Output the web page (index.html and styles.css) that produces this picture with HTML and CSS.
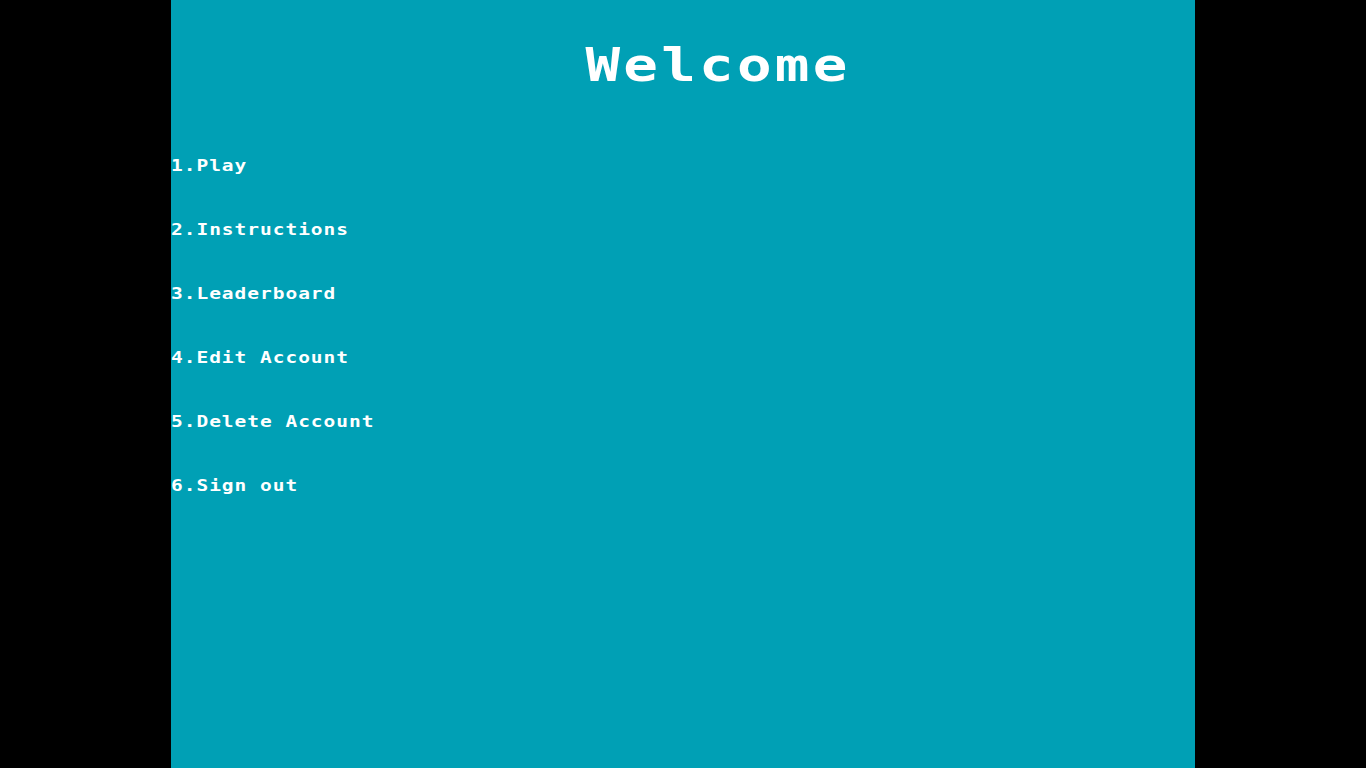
FILE: index.html
```html
<!DOCTYPE html>
<html lang="en">
<head>
<meta charset="utf-8">
<title>Welcome</title>
<link rel="stylesheet" href="styles.css">
</head>
<body>
<main class="screen">
  <h1 class="title"><span class="title-text">Welcome</span></h1>
  <ul class="menu">
    <li class="menu-item"><span class="menu-text">1.Play</span></li>
    <li class="menu-item"><span class="menu-text">2.Instructions</span></li>
    <li class="menu-item"><span class="menu-text">3.Leaderboard</span></li>
    <li class="menu-item"><span class="menu-text">4.Edit Account</span></li>
    <li class="menu-item"><span class="menu-text">5.Delete Account</span></li>
    <li class="menu-item"><span class="menu-text">6.Sign out</span></li>
  </ul>
</main>
</body>
</html>
```
FILE: styles.css
```css
html, body {
  margin: 0;
  padding: 0;
  background: #000;
}
.screen {
  width: 1024px;
  height: 768px;
  margin: 0 auto;
  background: #00a0b5;
  color: #fff;
  font-family: "DejaVu Sans Mono", "Liberation Mono", monospace;
  font-weight: bold;
  overflow: hidden;
}
.title {
  margin: 0;
  padding-left: 70px;
  text-align: center;
  font-size: 46px;
  line-height: 130px;
  font-weight: bold;
}
.title-text {
  display: inline-block;
  letter-spacing: 2.6px;
  transform: scaleX(1.25);
  transform-origin: center;
}
.menu {
  list-style: none;
  margin: 4px 0 0;
  padding: 0;
}
.menu-item {
  font-size: 15px;
  line-height: 64px;
  white-space: pre;
}
.menu-text {
  display: inline-block;
  letter-spacing: 0.75px;
  transform: scaleX(1.3);
  transform-origin: left center;
}
```
